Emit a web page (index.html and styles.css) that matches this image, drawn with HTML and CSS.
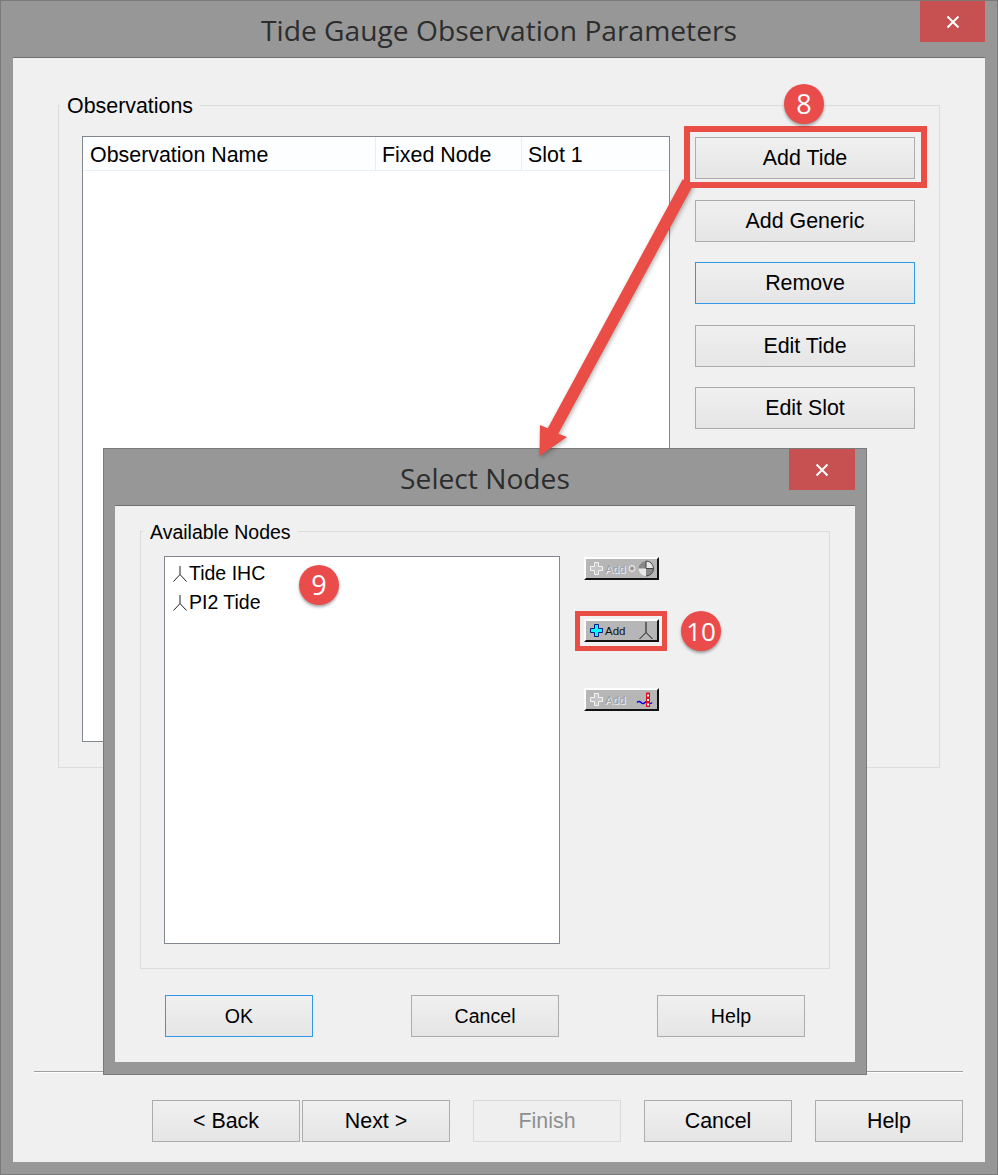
FILE: index.html
```html
<!DOCTYPE html>
<html lang="en">
<head>
<meta charset="utf-8">
<title>Tide Gauge Observation Parameters</title>
<link rel="stylesheet" href="styles.css">
</head>
<body>
<div class="window main-window">
  <div class="titlebar">
    <div class="title">Tide Gauge Observation Parameters</div>
    <div class="close close-main"><svg width="14" height="14" viewBox="0 0 14 14"><path d="M1.5 1.5 12.5 12.5M12.5 1.5 1.5 12.5" stroke="#fff" stroke-width="2"/></svg></div>
  </div>
  <div class="client">
    <div class="group group-obs">
      <div class="legend">Observations</div>
      <div class="obs-row">
        <div class="list obs-list">
          <div class="list-head">
            <div class="col col-name">Observation Name</div>
            <div class="col col-node">Fixed Node</div>
            <div class="col col-slot">Slot 1</div>
          </div>
        </div>
        <div class="obs-actions">
          <button class="btn wide">Add Tide</button>
          <button class="btn wide">Add Generic</button>
          <button class="btn wide focus">Remove</button>
          <button class="btn wide">Edit Tide</button>
          <button class="btn wide">Edit Slot</button>
        </div>
      </div>
    </div>
    <div class="separator"></div>
    <div class="wizard-row">
      <button class="btn">&lt; Back</button>
      <button class="btn next">Next &gt;</button>
      <button class="btn disabled">Finish</button>
      <button class="btn">Cancel</button>
      <button class="btn">Help</button>
    </div>
  </div>
</div>

<div class="window dialog">
  <div class="titlebar">
    <div class="title">Select Nodes</div>
    <div class="close close-dialog"><svg width="14" height="14" viewBox="0 0 14 14"><path d="M1.5 1.5 12.5 12.5M12.5 1.5 1.5 12.5" stroke="#fff" stroke-width="2"/></svg></div>
  </div>
  <div class="client dialog-client">
    <div class="group group-nodes">
      <div class="legend">Available Nodes</div>
      <div class="nodes-row">
        <div class="list nodes-list">
          <div class="node"><svg class="node-icon" width="14" height="16" viewBox="0 0 14 16"><path d="M7 0V8.500L.5 15.500M7 8.500 13.500 15.500" fill="none" stroke="#222" stroke-width="1"/></svg>Tide IHC</div>
          <div class="node"><svg class="node-icon" width="14" height="16" viewBox="0 0 14 16"><path d="M7 0V8.500L.5 15.500M7 8.500 13.500 15.500" fill="none" stroke="#222" stroke-width="1"/></svg>PI2 Tide</div>
        </div>
        <div class="tools">
          <div class="tool off">
            <svg class="plus" width="13" height="13" viewBox="0 0 13 13"><path d="M4.5 .5h4v4h4v4h-4v4h-4v-4h-4v-4h4z" fill="#c4c4c4" stroke="#f4f4f4"/></svg>
            <span class="tool-label">Add</span>
            <svg class="tool-icon" width="31" height="18" viewBox="0 0 31 18"><circle cx="6" cy="8.500" r="3" fill="none" stroke="#eee"/><circle cx="6" cy="8.500" r="1.200" fill="#888"/><circle cx="20" cy="8.500" r="7.500" fill="#e8e8e8"/><path d="M20 1A7.500 7.500 0 0 0 12.500 8.500H20zM20 8.500h7.500A7.500 7.500 0 0 1 20 16z" fill="#888"/><path d="M20 1A7.500 7.500 0 0 1 20 16M20 1V8.500H27.500" fill="none" stroke="#444"/></svg>
          </div>
          <div class="tool on">
            <svg class="plus" width="13" height="13" viewBox="0 0 13 13"><path d="M4.5 .5h4v4h4v4h-4v4h-4v-4h-4v-4h4z" fill="#0ff" stroke="#00188f"/></svg>
            <span class="tool-label">Add</span>
            <svg class="tool-icon" width="31" height="18" viewBox="0 0 31 18"><path d="M20 0V10.500L13.500 17M20 10.500 26.500 17" fill="none" stroke="#111"/></svg>
          </div>
          <div class="tool off last">
            <svg class="plus" width="13" height="13" viewBox="0 0 13 13"><path d="M4.5 .5h4v4h4v4h-4v4h-4v-4h-4v-4h4z" fill="#c4c4c4" stroke="#f4f4f4"/></svg>
            <span class="tool-label">Add</span>
            <svg class="tool-icon" width="31" height="18" viewBox="0 0 31 18"><path d="M11 11.500q2-2 4 0t4 0 4 0 3 0" fill="none" stroke="#0000e0" stroke-width="1.200"/><path d="M22 1.500v14.500" stroke="#e01020" stroke-width="4"/><path d="M22 3.500v2M22 8v2M22 12.500v2" stroke="#fff" stroke-width="2"/></svg>
          </div>
        </div>
      </div>
    </div>
    <div class="dialog-buttons">
      <button class="btn focus">OK</button>
      <button class="btn">Cancel</button>
      <button class="btn">Help</button>
    </div>
  </div>
</div>

<svg class="arrow" width="998" height="1175" viewBox="0 0 998 1175">
  <polygon points="682.700,179.200 547.700,428.200 540,425 539.500,456 567,437 558.300,433.800 693.300,184.800" fill="#ea4c46"/>
</svg>
<div class="highlight hl-tide"></div>
<div class="highlight hl-add"></div>
<div class="badge badge-8">8</div>
<div class="badge badge-9">9</div>
<div class="badge badge-10">10</div>
</body>
</html>
```
FILE: styles.css
```css
* { box-sizing: border-box; }
html, body { margin: 0; padding: 0; }
body {
  width: 998px;
  height: 1175px;
  position: relative;
  overflow: hidden;
  background: #979797;
  font-family: "Liberation Sans", Arial, sans-serif;
  color: #000;
}
.window {
  display: flex;
  flex-direction: column;
  background: #979797;
  border: 1px solid #7a7a7a;
}
.main-window { width: 998px; height: 1175px; padding: 0 12px 12px; }
.titlebar {
  height: 56px;
  flex: none;
  display: flex;
  align-items: center;
  justify-content: center;
  position: relative;
}
.title {
  font-family: "Open Sans", "Noto Sans", sans-serif;
  font-size: 28.2px;
  color: #2d2d2d;
  padding-top: 2px;
}
.close {
  position: absolute;
  top: 0;
  display: flex;
  align-items: center;
  justify-content: center;
  background: #c75050;
  height: 41px;
}
.close-main { right: 0; width: 65px; }
.close-dialog { right: 0; width: 66px; }
.client {
  flex: 1;
  background: #f0f0f0;
  border-top: 1px solid #6f6f6f;
  display: flex;
  flex-direction: column;
  padding-top: 47px;
}
.group {
  border: 1px solid #dcdcdc;
  display: flex;
  flex-direction: column;
}
.group-obs { width: 882px; height: 663px; margin-left: 45px; padding: 0 0 0 23px; }
.legend {
  width: fit-content;
  height: 24px;
  line-height: 24px;
  font-size: 21.4px;
  background: #f0f0f0;
  padding: 0 7px;
  margin: -12px 0 0 -22px;
}
.obs-row { display: flex; gap: 25px; margin-top: 18px; }
.list { background: #fff; border: 1px solid #828790; }
.obs-list { width: 588px; height: 606px; }
.list-head {
  height: 34px;
  display: flex;
  background: #fdfeff;
  border-bottom: 1px solid #e5f1fb;
}
.col {
  font-size: 21.4px;
  line-height: 36px;
  padding-left: 6px;
  border-right: 1px solid #e5edf5;
}
.col-name { width: 293px; padding-left: 7px; }
.col-node { width: 146px; }
.col-slot { flex: 1; border-right: 0; }
.obs-actions { display: flex; flex-direction: column; gap: 20px; padding-top: 1px; }
.obs-actions .btn:nth-child(even) { margin-top: 1px; }
.btn {
  width: 148px;
  height: 42px;
  padding: 0;
  border: 1px solid #acacac;
  background: linear-gradient(#f0f0f0, #e5e5e5);
  font-family: "Liberation Sans", Arial, sans-serif;
  font-size: 21.4px;
  color: #000;
}
.btn.wide { width: 220px; }
.btn.focus { border-color: #2f9ae6; }
.btn.disabled { background: #efefef; border-color: #d9d9d9; color: #8f8f8f; }
.separator {
  width: 929px;
  height: 2px;
  margin: 303px 0 0 21px;
  background: #a0a0a0;
  border-bottom: 1px solid #fff;
}
.wizard-row {
  display: flex;
  gap: 23px;
  margin: 27px 0 0 139px;
}
.wizard-row .next { margin-left: -21px; }
.dialog {
  position: absolute;
  left: 103px;
  top: 448px;
  width: 764px;
  height: 627px;
  padding: 0 11px 12px;
}
.dialog-client { padding-top: 25px; }
.group-nodes { width: 690px; height: 438px; margin-left: 25px; padding-left: 23px; }
.nodes-row { display: flex; gap: 24px; margin-top: 12px; }
.group-nodes .legend { margin-left: -21px; font-size: 19.5px; }
.nodes-list { width: 396px; height: 388px; padding-top: 2px; }
.node {
  display: flex;
  align-items: center;
  height: 29px;
  padding-left: 8px;
  font-size: 19.500px;
}
.node-icon { margin-right: 2px; }
.tools { display: flex; flex-direction: column; padding-top: 1px; }
.tool {
  width: 75px;
  height: 23px;
  display: flex;
  align-items: center;
  padding-left: 4px;
  background: #b6b6b6;
  border-style: solid;
  border-width: 2px;
  border-color: #fff #111 #111 #fff;
  margin-bottom: 39px;
}
.tool.on { margin-bottom: 46px; }
.tool.last { margin-bottom: 0; }
.tool-label { font-size: 11.5px; margin-left: 2px; color: #111; }
.tool.off .tool-label { color: #a2a2a2; text-shadow: 1px 1px 0 #f2f2f2; }
.tool-icon { margin-left: auto; }
.dialog-buttons {
  display: flex;
  justify-content: space-between;
  padding: 0 50px;
  margin-top: 26px;
}
.dialog-buttons .btn { font-size: 19.6px; }
.arrow { position: absolute; left: 0; top: 0; pointer-events: none; filter: drop-shadow(1px 2px 2px rgba(0,0,0,.3)); }
.highlight { position: absolute; border: 6px solid #ea4c46; }
.hl-tide { left: 684px; top: 126px; width: 243px; height: 62px; }
.hl-add { left: 575px; top: 611px; width: 92px; height: 40px; border-width: 5px; }
.badge {
  position: absolute;
  width: 40px;
  height: 40px;
  border-radius: 50%;
  background: #ea4c4c;
  color: #fff;
  font-family: "Open Sans", sans-serif;
  font-size: 27px;
  line-height: 40px;
  text-align: center;
  box-shadow: 0 2px 3px rgba(0,0,0,.35);
}
.badge-8 { left: 784px; top: 84px; }
.badge-9 { left: 299px; top: 565px; }
.badge-10 { left: 681px; top: 611px; font-size: 26px; }
```
